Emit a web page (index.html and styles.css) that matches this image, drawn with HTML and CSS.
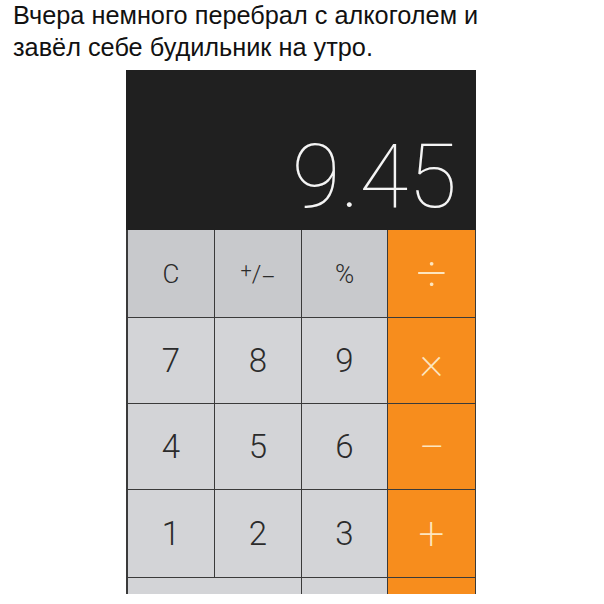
FILE: index.html
```html
<!DOCTYPE html>
<html lang="ru">
<head>
<meta charset="utf-8">
<link rel="stylesheet" href="styles.css">
</head>
<body>
<p class="caption">Вчера немного перебрал с алкоголем и<br>завёл себе будильник на утро.</p>
<div class="calc">
  <div class="display"><span class="value">9.45</span></div>
  <div class="keys">
    <div class="key fn"><span class="small">C</span></div>
    <div class="key fn"><span class="pm"><sup>+</sup>/<sub>–</sub></span></div>
    <div class="key fn"><span class="small">%</span></div>
    <div class="key op"><span class="div">÷</span></div>
    <div class="key">7</div>
    <div class="key">8</div>
    <div class="key">9</div>
    <div class="key op">×</div>
    <div class="key">4</div>
    <div class="key">5</div>
    <div class="key">6</div>
    <div class="key op">−</div>
    <div class="key">1</div>
    <div class="key">2</div>
    <div class="key">3</div>
    <div class="key op">+</div>
    <div class="key wide"></div>
    <div class="key"></div>
    <div class="key op"></div>
  </div>
</div>
</body>
</html>
```
FILE: styles.css
```css
html, body {
  margin: 0;
  padding: 0;
  background: #fff;
  height: 604px;
  overflow: hidden;
}
.caption {
  margin: 0;
  padding: 0 0 0 13px;
  font-family: "Liberation Sans", Arial, sans-serif;
  font-size: 25.3px;
  line-height: 31.5px;
  color: #111;
  height: 70px;
}
.calc {
  margin-left: 126px;
  width: 350px;
  height: 524px;
  overflow: hidden;
  background: #1e1e1e;
  display: flex;
  flex-direction: column;
}
.display {
  height: 160px;
  flex: none;
  background: #202020;
  display: flex;
  align-items: flex-end;
  justify-content: flex-end;
  padding-right: 19px;
  box-sizing: border-box;
}
.value {
  font-family: Roboto, "Liberation Sans", sans-serif;
  font-weight: 100;
  font-size: 89px;
  line-height: 89px;
  color: #f4f4f4;
  margin-bottom: 9px;
}
.keys {
  display: grid;
  grid-template-columns: 86px 86px 85px 87px;
  grid-template-rows: 87px 85px 85px 87px 86px;
  gap: 1px;
  padding: 0 1px 0 2px;
  background: #3a3a3a;
}
.key {
  background: #d3d4d7;
  display: flex;
  align-items: center;
  justify-content: center;
  font-family: Roboto, "Liberation Sans", sans-serif;
  font-weight: 300;
  font-size: 33px;
  color: #2b2b2b;
}
.key.fn {
  background: #c8c9cc;
}
.key.op {
  background: #f78d1d;
  color: #fde6c0;
  font-weight: 200;
  font-size: 46px;
}
.key.op .div {
  font-size: 54px;
}
.key.wide {
  grid-column: span 2;
}
.small {
  font-size: 26px;
}
.pm {
  font-size: 24px;
  line-height: 1;
  display: inline-flex;
  align-items: center;
}
.pm sup {
  font-size: 20px;
  position: relative;
  top: -4px;
  vertical-align: baseline;
}
.pm sub {
  font-size: 22px;
  position: relative;
  top: 4px;
  vertical-align: baseline;
}
```
